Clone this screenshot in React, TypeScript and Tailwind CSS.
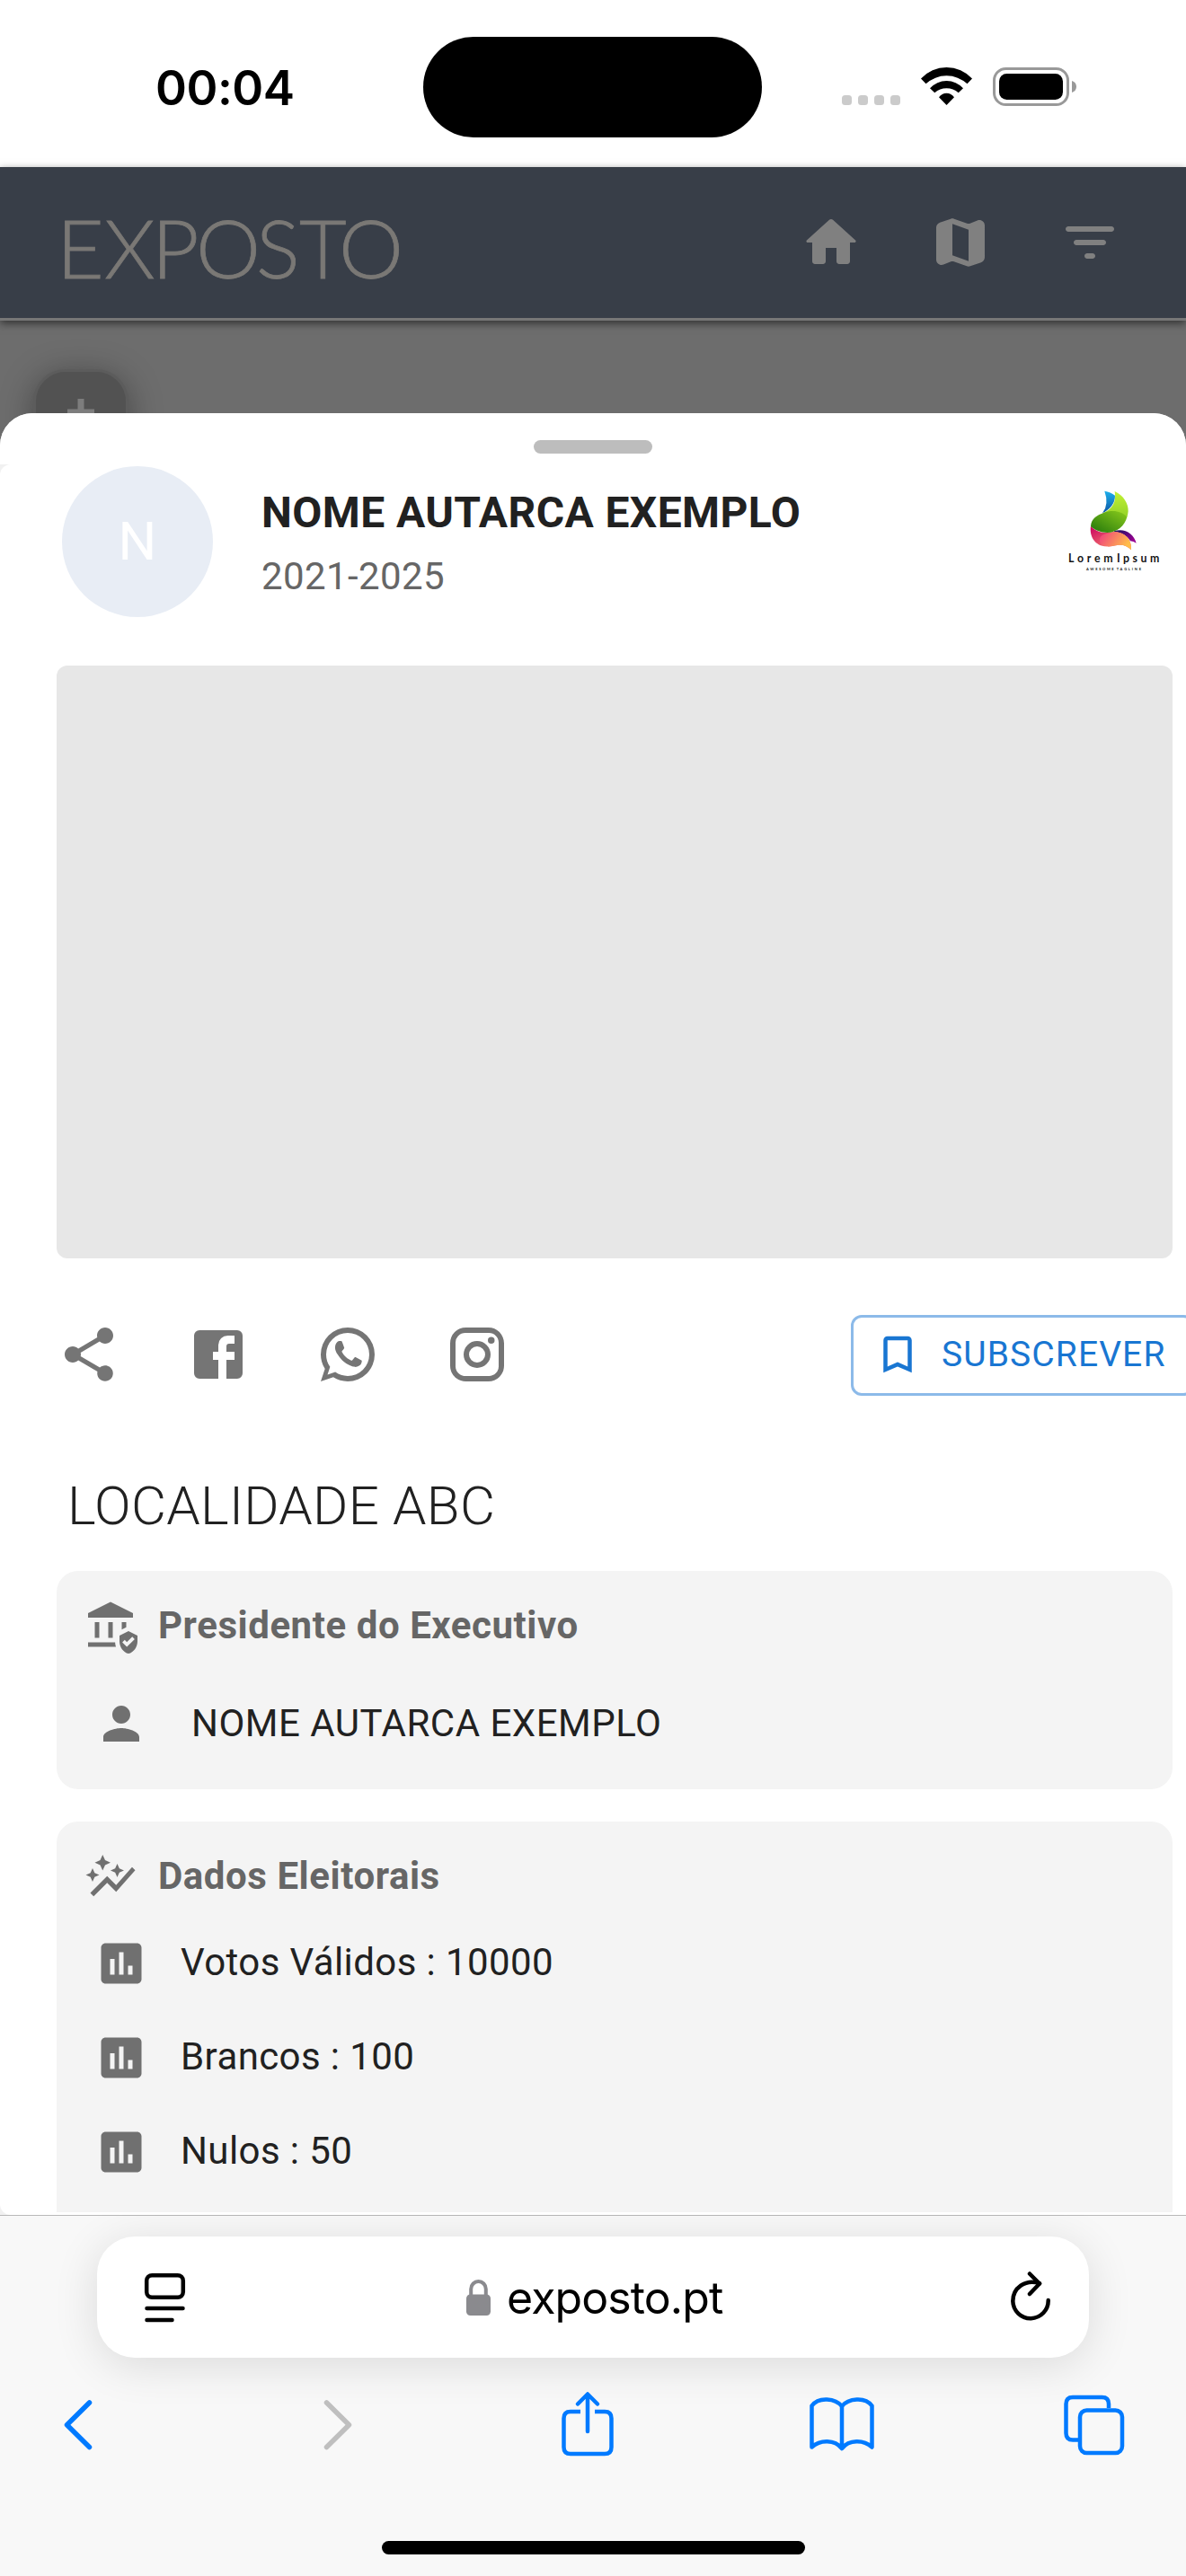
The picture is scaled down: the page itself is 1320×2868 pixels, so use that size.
import React from 'react';
import {
  MdAssessment,
  MdAssuredWorkload,
  MdAutoGraph,
  MdBookmarkBorder,
  MdPerson,
} from 'react-icons/md';

const NAME = 'NOME AUTARCA EXEMPLO';

const ELECTION_DATA = [
  { label: 'Votos Válidos', value: 10000 },
  { label: 'Brancos', value: 100 },
  { label: 'Nulos', value: 50 },
];

const ICONS = {
  home: 'M10 19v-5h4v5c0 .55.45 1 1 1h3c.55 0 1-.45 1-1v-7h1.7c.46 0 .68-.57.33-.87L12.67 3.6c-.38-.34-.96-.34-1.34 0l-8.36 7.53c-.34.3-.13.87.33.87H5v7c0 .55.45 1 1 1h3c.55 0 1-.45 1-1z',
  map: 'M14.65 4.98l-5-1.75c-.42-.15-.88-.15-1.3-.01L4.36 4.56C3.55 4.84 3 5.6 3 6.46v11.85c0 1.41 1.41 2.37 2.72 1.86l2.93-1.14c.22-.09.47-.09.69-.01l5 1.75c.42.15.88.15 1.3.01l3.99-1.34c.81-.27 1.36-1.04 1.36-1.9V5.69c0-1.41-1.41-2.37-2.72-1.86l-2.93 1.14c-.22.08-.46.09-.68.01zM15 18.89l-6-2.11V5.11l6 2.11v11.67z',
  filter:
    'M11 18h2c.55 0 1-.45 1-1s-.45-1-1-1h-2c-.55 0-1 .45-1 1s.45 1 1 1zM3 7c0 .55.45 1 1 1h16c.55 0 1-.45 1-1s-.45-1-1-1H4c-.55 0-1 .45-1 1zm4 6h10c.55 0 1-.45 1-1s-.45-1-1-1H7c-.55 0-1 .45-1 1s.45 1 1 1z',
  share:
    'M18 16.08c-.76 0-1.44.3-1.96.77L8.91 12.7c.05-.23.09-.46.09-.7s-.04-.47-.09-.7l7.05-4.11c.54.5 1.25.81 2.04.81 1.66 0 3-1.34 3-3s-1.34-3-3-3-3 1.34-3 3c0 .24.04.47.09.7L8.04 9.81C7.5 9.31 6.79 9 6 9c-1.66 0-3 1.34-3 3s1.34 3 3 3c.79 0 1.5-.31 2.04-.81l7.12 4.16c-.05.21-.08.43-.08.65 0 1.61 1.31 2.92 2.92 2.92s2.92-1.31 2.92-2.92-1.31-2.92-2.92-2.92z',
  facebook:
    'M5 3h14a2 2 0 0 1 2 2v14a2 2 0 0 1-2 2h-4v-7h3v-3h-3V9a1 1 0 0 1 1-1h2V5h-2.5A3.5 3.5 0 0 0 12 8.5V11h-2v3h2v7H5a2 2 0 0 1-2-2V5a2 2 0 0 1 2-2z',
  whatsapp:
    'M16.75 13.96c.25.13.41.2.46.3.06.11.04.61-.21 1.18-.2.56-1.24 1.1-1.7 1.12-.46.02-.47.36-2.96-.73-2.49-1.09-3.99-3.75-4.11-3.92-.12-.17-.96-1.38-.92-2.61.05-1.22.69-1.8.95-2.04.24-.26.51-.29.68-.26h.47c.15 0 .36-.06.55.45l.69 1.87c.06.13.1.28.01.44l-.27.41-.39.42c-.12.12-.26.25-.12.5.12.26.62 1.09 1.32 1.78.91.88 1.71 1.17 1.95 1.3.24.14.39.12.54-.04l.81-.94c.19-.25.35-.19.58-.11l1.67.88M12 2a10 10 0 0 1 10 10 10 10 0 0 1-10 10c-1.97 0-3.8-.57-5.35-1.55L2 22l1.55-4.65A9.969 9.969 0 0 1 2 12 10 10 0 0 1 12 2m0 2a8 8 0 0 0-8 8c0 1.72.54 3.31 1.46 4.61L4.5 19.5l2.89-.96A7.95 7.95 0 0 0 12 20a8 8 0 0 0 8-8 8 8 0 0 0-8-8z',
  instagram:
    'M7.8 2h8.4C19.4 2 22 4.6 22 7.8v8.4a5.8 5.8 0 0 1-5.8 5.8H7.8C4.6 22 2 19.4 2 16.2V7.8A5.8 5.8 0 0 1 7.8 2m-.2 2A3.6 3.6 0 0 0 4 7.6v8.8C4 18.39 5.61 20 7.6 20h8.8a3.6 3.6 0 0 0 3.6-3.6V7.6C20 5.61 18.39 4 16.4 4H7.6m9.65 1.5a1.25 1.25 0 0 1 1.25 1.25A1.25 1.25 0 0 1 17.25 8 1.25 1.25 0 0 1 16 6.75a1.25 1.25 0 0 1 1.25-1.25M12 7a5 5 0 0 1 5 5 5 5 0 0 1-5 5 5 5 0 0 1-5-5 5 5 0 0 1 5-5m0 2a3 3 0 0 0-3 3 3 3 0 0 0 3 3 3 3 0 0 0 3-3 3 3 0 0 0-3-3z',
};

const Icon: React.FC<{ name: keyof typeof ICONS }> = ({ name }) => (
  <svg viewBox="0 0 24 24" className="size-[72px] shrink-0" fill="currentColor">
    <path d={ICONS[name]} />
  </svg>
);

const StatusBar: React.FC = () => (
  <div className="relative flex h-[186px] shrink-0 bg-white text-black">
    <div className="w-[471px] pl-[173px] pt-[66px] font-['Inter'] text-[53px] leading-[64px] font-semibold tracking-[-0.5px]">
      00:04
    </div>
    <div className="mt-[41px] h-[112px] w-[377px] rounded-full bg-black" />
    <svg viewBox="0 0 280 60" className="ml-[82px] mt-[66px] h-[60px] w-[280px]">
      {/* signal */}
      <g fill="#cbcbcb">
        <rect x="7" y="40" width="11" height="11" rx="3.5" />
        <rect x="25" y="40" width="11" height="11" rx="3.5" />
        <rect x="43" y="40" width="11" height="11" rx="3.5" />
        <rect x="61" y="40" width="11" height="11" rx="3.5" />
      </g>
      {/* wifi */}
      <path d="M95 21.500A38.700 38.700 0 0 1 152 21.500L146.500 27.300A33.900 33.900 0 0 0 100.500 27.300Z" />
      <path d="M105 32.300A24.800 24.800 0 0 1 142 32.300L136.700 37.300A19.900 19.900 0 0 0 110.300 37.300Z" />
      <path d="M115 42.300A10.200 10.200 0 0 1 132 42.300L123.500 51Z" />
      {/* battery */}
      <rect x="176.500" y="10.500" width="82" height="40" rx="13" fill="none" stroke="#999" strokeWidth="3" />
      <rect x="182" y="16" width="71" height="29" rx="8.500" />
      <path d="M263 24c3 .8 5 3.300 5 6.500s-2 5.700-5 6.500z" fill="#999" />
    </svg>
  </div>
);

const AppHeader: React.FC = () => (
  <header className="relative z-10 flex h-[171px] shrink-0 items-center justify-between border-b-[3px] border-[#777] bg-[#383e48] pr-[71px] pl-[50px] text-[#808080] shadow-[0_3px_9px_rgba(0,0,0,0.55)]">
    <svg viewBox="0 0 420 168" className="h-[168px] w-[420px]">
      <text
        x="13 66 119 168 235 283 327"
        y="123.500"
        fontFamily="Lato"
        fontWeight="300"
        fontSize="91"
        fill="#7a7875"
        stroke="#7a7875"
        strokeWidth="0.800"
      >
        EXPOSTO
      </text>
    </svg>
    <nav className="flex gap-[72px]">
      <Icon name="home" />
      <Icon name="map" />
      <Icon name="filter" />
    </nav>
  </header>
);

const PartyLogo: React.FC = () => (
  <svg viewBox="0 0 480 420" className="h-[140px] w-[160px] shrink-0">
    <defs>
      <linearGradient id="blue" x1="0" y1="0" x2="0" y2="1">
        <stop offset="0" stopColor="#1cb0ec" />
        <stop offset="1" stopColor="#0d55a4" />
      </linearGradient>
      <linearGradient id="lime" x1="0" y1="0" x2="0" y2="1">
        <stop offset="0" stopColor="#c3f235" />
        <stop offset="1" stopColor="#93d228" />
      </linearGradient>
      <linearGradient id="green" x1="0" y1="1" x2="1" y2="0">
        <stop offset="0.050" stopColor="#277a0c" />
        <stop offset="1" stopColor="#8acb1c" />
      </linearGradient>
      <linearGradient id="coral" x1="0" y1="0" x2="1" y2="0.400">
        <stop offset="0" stopColor="#f03a80" />
        <stop offset="1" stopColor="#ffbd4a" />
      </linearGradient>
      <linearGradient id="magenta" x1="0" y1="0" x2="1" y2="1">
        <stop offset="0" stopColor="#c9005f" />
        <stop offset="0.600" stopColor="#f06a6c" />
      </linearGradient>
      <linearGradient id="purple" x1="0" y1="0" x2="1" y2="0.500">
        <stop offset="0.100" stopColor="#1d1463" />
        <stop offset="1" stopColor="#96008f" />
      </linearGradient>
    </defs>
    <path d="M208 80Q228 83 243 95Q243 132 201 154Q224 125 208 80Z" fill="url(#blue)" />
    <path d="M242 81C272 95 288 122 287 148Q286 158 283 168L200 155C235 140 248 118 242 81Z" fill="url(#lime)" />
    <path d="M240 214C275 203 305 222 314 254Q305 248 294 247C282 228 265 218 240 217Z" fill="url(#purple)" />
    <path d="M162 197C185 222 215 221 240 216C272 217 300 238 297 277C285 263 268 258 250 261C235 264 228 266 215 265C176 264 157 232 162 197Z" fill="url(#magenta)" />
    <path d="M192 240C195 222 222 222 240 216C272 217 300 238 297 277C285 263 268 258 250 261C235 264 228 266 215 265C200 263 190 255 192 240Z" fill="url(#coral)" />
    <path d="M162 198C163 172 185 160 205 153C235 142 265 147 283 167C275 196 250 218 217 219C195 219 175 210 162 198Z" fill="url(#green)" />
    <g fontFamily="Lato" fontWeight="700" fill="#151515">
      <text x="87" y="319" textLength="149" fontSize="37">Lorem</text>
      <text x="249" y="319" textLength="142" fontSize="37">Ipsum</text>
      <text x="147" y="345" textLength="92" fontSize="12">AWESOME</text>
      <text x="248" y="345" textLength="82" fontSize="12">TAGLINE</text>
    </g>
  </svg>
);

const ProfileHeader: React.FC = () => (
  <div className="flex h-[224px] w-[1320px] pt-[2px] pl-[69px]">
    <div className="flex size-[168px] shrink-0 items-center justify-center rounded-full bg-[#e8edf5] text-[60px] text-white">
      N
    </div>
    <div className="ml-[54px] flex-1 pt-[16px]">
      <h2 className="text-[48px] leading-[72px] font-bold tracking-[0.4px]">{NAME}</h2>
      <p className="text-[42px] leading-[70px] tracking-[0.4px] text-[#666]">2021-2025</p>
    </div>
    <div className="pt-[1px]">
      <PartyLogo />
    </div>
  </div>
);

const SocialRow: React.FC = () => (
  <div className="mt-[63px] flex h-[90px] items-center justify-between">
    <div className="flex gap-[72px] pb-[2px] text-[#757575]">
      <Icon name="share" />
      <Icon name="facebook" />
      <Icon name="whatsapp" />
      <Icon name="instagram" />
    </div>
    <button className="flex h-[90px] w-[382px] items-center rounded-xl border-[3px] border-[#8cbae9] pb-[2px] pl-[22px] text-[39px] tracking-[1.1px] text-[#1976d2]">
      <MdBookmarkBorder className="mr-[22px] size-[54px]" />
      SUBSCREVER
    </button>
  </div>
);

const CardTitle: React.FC<{ icon: React.ReactNode; children: React.ReactNode }> = ({ icon, children }) => (
  <div className="flex h-[60px] items-center gap-[23px] text-[60px] text-[#707070]">
    {icon}
    <h4 className="pb-[2px] text-[42px] leading-[58px] font-bold tracking-[0.55px] text-[#666]">{children}</h4>
  </div>
);

const DetailsSheet: React.FC = () => (
  <section className="relative mt-[103px] flex h-[2006px] flex-col overflow-hidden rounded-t-[36px] bg-[#f1f1f1] text-[#212121]">
    <div className="flex h-[57px] shrink-0 justify-center bg-white pt-[30px]">
      <div className="h-[15px] w-[132px] rounded-full bg-[#bdbdbd]" />
    </div>

    <div className="h-[1949px] w-[1360px] rounded-xl bg-white">
      <ProfileHeader />

      <div className="ml-[63px] w-[1266px]">
        <div className="h-[660px] w-[1242px] rounded-xl bg-[#e7e7e7]" />
        <SocialRow />
        <h3 className="mt-[87px] ml-[12px] h-[108px] text-[60px] leading-[72px] font-light tracking-[0.3px]">
          LOCALIDADE ABC
        </h3>

        {/* Executive */}
        <div className="h-[243px] w-[1242px] rounded-3xl bg-[#f4f4f4] pt-[32px] pl-[30px]">
          <CardTitle icon={<MdAssuredWorkload />}>Presidente do Executivo</CardTitle>
          <div className="mt-[48px] ml-[12px] flex items-center">
            <MdPerson className="size-[60px] text-[#707070]" />
            <span className="ml-[48px] text-[42px] leading-[60px] tracking-[0.5px]">{NAME}</span>
          </div>
        </div>

        {/* Election data, cut off by the browser toolbar */}
        <div className="mt-[36px] h-[435px] w-[1242px] rounded-t-3xl bg-[#f4f4f4] pt-[32px] pl-[30px]">
          <CardTitle icon={<MdAutoGraph />}>Dados Eleitorais</CardTitle>
          <ul className="mt-[13px] ml-[12px]">
            {ELECTION_DATA.map(item => (
              <li key={item.label} className="flex h-[105px] items-center">
                <MdAssessment className="size-[60px] text-[#707070]" />
                <span className="ml-[36px] pb-[2px] text-[42px] leading-[58px] tracking-[0.4px]">
                  {item.label} : {item.value}
                </span>
              </li>
            ))}
          </ul>
        </div>
      </div>
    </div>
  </section>
);

const BrowserBar: React.FC = () => (
  <footer className="flex h-[402px] shrink-0 flex-col items-center border-t border-[#b9b9b9] bg-[#f8f8f8]">
    <div className="mt-[23px] flex h-[135px] w-[1104px] items-center rounded-[42px] bg-white pr-[41px] pl-[50px] text-black shadow-[0_8px_50px_rgba(0,0,0,0.12)]">
      <svg viewBox="0 0 50 60" className="h-[60px] w-[50px]" fill="none" stroke="#000" strokeWidth="4.500" strokeLinecap="round">
        <rect x="5.200" y="5.200" width="40.600" height="24.600" rx="6" />
        <path d="M5.500 42h40M5.500 55h28" />
      </svg>
      <div className="flex flex-1 items-center pl-[311px]">
        <svg viewBox="0 0 27 42" className="mr-[18px] h-[42px] w-[27px]">
          <path d="M5.200 20V11.500a8.300 8.500 0 0 1 16.600 0V20" fill="none" stroke="#8a8a8e" strokeWidth="4" />
          <rect y="17.500" width="27" height="23.500" rx="4.500" fill="#8a8a8e" />
        </svg>
        <span className="font-['Inter'] text-[50px] leading-[60px] tracking-[-0.9px]">exposto.pt</span>
      </div>
      <svg viewBox="0 0 50 60" className="h-[60px] w-[50px]" fill="none" stroke="#000" strokeWidth="4.500" strokeLinecap="round" strokeLinejoin="round">
        <path d="M36 14.200C20 9 6.300 19.500 6.300 34a19.700 19.700 0 0 0 39.400-1" />
        <path d="M25 3.500L36 14.500L25 26" />
      </svg>
    </div>

    <div className="mt-[35px] flex h-[80px] w-full items-center pl-[68px] text-[#007aff]">
      <svg viewBox="0 0 40 80" className="h-[80px] w-[40px]" fill="none" stroke="currentColor" strokeWidth="5.500" strokeLinecap="round" strokeLinejoin="round">
        <path d="M31.500 15L6.500 39.700L31.500 64.500" />
      </svg>
      <svg viewBox="0 0 40 80" className="ml-[248px] h-[80px] w-[40px] text-[#bfbfbf]" fill="none" stroke="currentColor" strokeWidth="5.500" strokeLinecap="round" strokeLinejoin="round">
        <path d="M7.500 15L32.500 39.700L7.500 64.500" />
      </svg>
      <svg viewBox="0 0 64 80" className="ml-[226px] h-[80px] w-[64px]" fill="none" stroke="currentColor" strokeWidth="4.500" strokeLinejoin="round">
        <path d="M24 25H13Q5.500 25 5.500 32.500V64.500Q5.500 72 13 72H51Q58.500 72 58.500 64.500V32.500Q58.500 25 51 25H40" />
        <path d="M32 47V6M21 16.500L32 5.500L43 16.500" strokeLinecap="round" />
      </svg>
      <svg viewBox="0 0 76 80" className="ml-[213px] h-[80px] w-[76px]" fill="none" stroke="currentColor" strokeWidth="4.500" strokeLinecap="round" strokeLinejoin="round">
        <path d="M38 19C31 10 12 8 4.500 18.500V64.500C14 56 30 56 38 66C46 56 62 56 71.500 64.500V18.500C64 8 45 10 38 19ZM38 19V66" />
      </svg>
      <svg viewBox="0 0 72 80" className="ml-[207px] h-[80px] w-[72px]" fill="none" stroke="currentColor" strokeWidth="4.500">
        <path d="M52 21V16.500Q52 9 44.500 9H12Q4.500 9 4.500 16.500V49Q4.500 56.500 12 56.500H18" />
        <rect x="20" y="23.500" width="47" height="47.500" rx="7.500" />
      </svg>
    </div>

    <div className="mt-[89px] h-[15px] w-[471px] rounded-full bg-black" />
  </footer>
);

const App: React.FC = () => (
  <div className="flex h-[2868px] w-[1320px] flex-col overflow-hidden bg-white font-['Roboto',sans-serif]">
    <StatusBar />
    <AppHeader />
    <main className="relative shrink-0 bg-[#6d6d6d]">
      {/* Map zoom control behind the sheet */}
      <div className="absolute top-[54px] left-[37px] flex h-[106px] w-[106px] justify-center rounded-[36px] border-[3px] border-[#5c5c5c] bg-[#525252] pt-[30px] shadow-[0_6px_36px_rgba(0,0,0,0.35)]">
        <svg viewBox="0 0 30 30" className="size-[30px]">
          <path d="M11.500 0h7v11.500H30v7H18.500V30h-7V18.500H0v-7h11.500z" fill="#7d7d7d" />
        </svg>
      </div>
      <DetailsSheet />
    </main>
    <BrowserBar />
  </div>
);

export default App;
